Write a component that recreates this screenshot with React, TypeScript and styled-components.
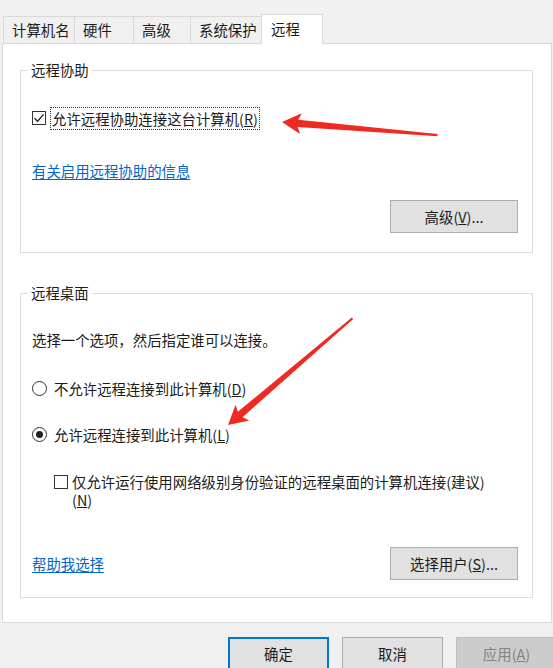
import React from 'react'
import styled, { createGlobalStyle } from 'styled-components'

const GlobalStyle = createGlobalStyle`
  html, body {
    margin: 0;
    padding: 0;
    background: #f0f0f0;
  }
  body {
    font-family: "Noto Sans CJK SC", "Noto Sans", sans-serif;
    font-size: 14.4px;
    color: #1b1b1b;
  }
`

const Window = styled.div`
  position: relative;
  width: 553px;
  height: 668px;
  overflow: hidden;
  background: #f0f0f0;
`

const TabStrip = styled.div`
  position: relative;
  z-index: 1;
  display: flex;
  align-items: flex-end;
  height: 43px;
  padding-left: 3px;
  box-sizing: border-box;
`

const Tab = styled.div<{ $w: number; $active?: boolean }>`
  width: ${(p) => p.$w}px;
  height: ${(p) => (p.$active ? 30 : 27)}px;
  margin-bottom: ${(p) => (p.$active ? -1 : 0)}px;
  margin-left: -1px;
  box-sizing: border-box;
  border: 1px solid #d9d9d9;
  border-bottom: none;
  background: ${(p) => (p.$active ? '#fff' : '#f0f0f0')};
  padding-left: ${(p) => (p.$active ? 9 : 8)}px;
  line-height: ${(p) => (p.$active ? 27 : 26)}px;
  white-space: nowrap;
  &:first-child {
    margin-left: 0;
  }
`

const Panel = styled.div`
  height: 580px;
  margin: 0 1px 0 2px;
  box-sizing: border-box;
  border: 1px solid #d9d9d9;
  background: #fff;
  padding: 16px 18px 0 17px;
`

const Group = styled.fieldset<{ $gap?: number }>`
  margin: ${(p) => p.$gap ?? 0}px 0 0 0;
  padding: 0;
  min-width: 0;
  border: 1px solid #dcdcdc;
`

const Legend = styled.legend`
  margin-left: 7px;
  padding: 0 3px;
  line-height: 20px;
`

const GroupBody = styled.div<{ $bottom: number }>`
  padding: 0 14px ${(p) => p.$bottom}px 11px;
`

const Row = styled.div<{ $top: number; $indent?: number }>`
  display: flex;
  align-items: center;
  height: 24px;
  margin-top: ${(p) => p.$top}px;
  padding-left: ${(p) => p.$indent ?? 0}px;
`

const CheckBox = styled.span`
  display: inline-flex;
  align-items: center;
  justify-content: center;
  flex: none;
  width: 14px;
  height: 14px;
  box-sizing: border-box;
  border: 1px solid #333;
  background: #fff;
`

const Radio = styled.span<{ $on?: boolean }>`
  display: inline-flex;
  align-items: center;
  justify-content: center;
  flex: none;
  width: 15px;
  height: 15px;
  box-sizing: border-box;
  border: 1px solid #333;
  border-radius: 50%;
  background: #fff;
  &::after {
    content: '';
    display: ${(p) => (p.$on ? 'block' : 'none')};
    width: 7px;
    height: 7px;
    border-radius: 50%;
    background: #222;
  }
`

const Label = styled.span<{ $focus?: boolean }>`
  margin-left: ${(p) => (p.$focus ? 4 : 5)}px;
  padding: 0 1px;
  line-height: 21px;
  border: 1px dotted ${(p) => (p.$focus ? '#333' : 'transparent')};
  white-space: nowrap;
`

const Text = styled.div<{ $top: number }>`
  margin-top: ${(p) => p.$top}px;
  line-height: 20px;
`

const LinkText = styled.a<{ $top?: number }>`
  display: inline-block;
  margin-top: ${(p) => p.$top ?? 0}px;
  line-height: 20px;
  color: #0066cc;
  text-decoration: underline;
  text-underline-offset: 2px;
  cursor: pointer;
`

const LongOption = styled.div`
  display: flex;
  align-items: flex-start;
  margin-top: 27px;
  padding-left: 22px;
  & > ${CheckBox} {
    margin-top: 2px;
  }
`

const LongLabel = styled.span`
  width: 425px;
  margin-left: 4px;
  line-height: 18px;
`

const ButtonRow = styled.div<{ $top: number; $split?: boolean }>`
  display: flex;
  align-items: center;
  justify-content: ${(p) => (p.$split ? 'space-between' : 'flex-end')};
  margin-top: ${(p) => p.$top}px;
`

const Button = styled.button<{ $w: number; $primary?: boolean; $disabled?: boolean }>`
  width: ${(p) => p.$w}px;
  height: 33px;
  flex: none;
  box-sizing: border-box;
  padding: 0;
  font: inherit;
  line-height: 20px;
  color: ${(p) => (p.$disabled ? '#838383' : '#1b1b1b')};
  background: ${(p) => (p.$disabled ? '#cccccc' : '#e1e1e1')};
  border: ${(p) =>
    p.$primary ? '2px solid #0078d7' : `1px solid ${p.$disabled ? '#bfbfbf' : '#adadad'}`};
`

const Footer = styled.div`
  display: flex;
  gap: 13px;
  padding: 14px 0 0 228px;
`

const Overlay = styled.svg`
  position: absolute;
  left: 0;
  top: 0;
  pointer-events: none;
`

const Check = () => (
  <svg width="12" height="12" viewBox="0 0 12 12">
    <path d="M1.5 6.2 L4.6 9.2 L10.6 2.4" fill="none" stroke="#222" strokeWidth="1.3" />
  </svg>
)

// red annotation arrow, drawn pointing left from its tip along +x
const Arrow = ({ x, y, angle, len }: { x: number; y: number; angle: number; len: number }) => (
  <g transform={`translate(${x} ${y}) rotate(${angle})`}>
    <polygon
      points={`0,0 19,-10.5 16,-3.6 ${len},-1.1 ${len},1.1 16,3.6 19,10.5`}
      fill="#ee2a22"
    />
  </g>
)

const tabs = [
  { name: '计算机名', w: 72 },
  { name: '硬件', w: 60 },
  { name: '高级', w: 58 },
  { name: '系统保护', w: 72 },
  { name: '远程', w: 62, active: true },
]

export default function App() {
  return (
    <Window>
      <GlobalStyle />
      <TabStrip>
        {tabs.map((t) => (
          <Tab key={t.name} $w={t.w} $active={t.active}>
            {t.name}
          </Tab>
        ))}
      </TabStrip>
      <Panel>
        <Group>
          <Legend>远程协助</Legend>
          <GroupBody $bottom={19}>
            <Row $top={26}>
              <CheckBox>
                <Check />
              </CheckBox>
              <Label $focus>
                允许远程协助连接这台计算机(<u>R</u>)
              </Label>
            </Row>
            <LinkText $top={31}>有关启用远程协助的信息</LinkText>
            <ButtonRow $top={19}>
              <Button $w={128}>
                高级(<u>V</u>)...
              </Button>
            </ButtonRow>
          </GroupBody>
        </Group>
        <Group $gap={30}>
          <Legend>远程桌面</Legend>
          <GroupBody $bottom={17}>
            <Text $top={27}>选择一个选项，然后指定谁可以连接。</Text>
            <Row $top={26}>
              <Radio />
              <Label>
                不允许远程连接到此计算机(<u>D</u>)
              </Label>
            </Row>
            <Row $top={22}>
              <Radio $on />
              <Label>
                允许远程连接到此计算机(<u>L</u>)
              </Label>
            </Row>
            <LongOption>
              <CheckBox />
              <LongLabel>
                仅允许运行使用网络级别身份验证的远程桌面的计算机连接(建议)
                <wbr />(<u>N</u>)
              </LongLabel>
            </LongOption>
            <ButtonRow $top={38} $split>
              <LinkText>帮助我选择</LinkText>
              <Button $w={128}>
                选择用户(<u>S</u>)...
              </Button>
            </ButtonRow>
          </GroupBody>
        </Group>
      </Panel>
      <Footer>
        <Button $w={101} $primary>
          确定
        </Button>
        <Button $w={101}>取消</Button>
        <Button $w={101} $disabled>
          应用(<u>A</u>)
        </Button>
      </Footer>
      <Overlay width="553" height="668">
        <Arrow x={282} y={122} angle={4.8} len={156} />
        <Arrow x={228} y={425} angle={-40.6} len={164} />
      </Overlay>
    </Window>
  )
}
